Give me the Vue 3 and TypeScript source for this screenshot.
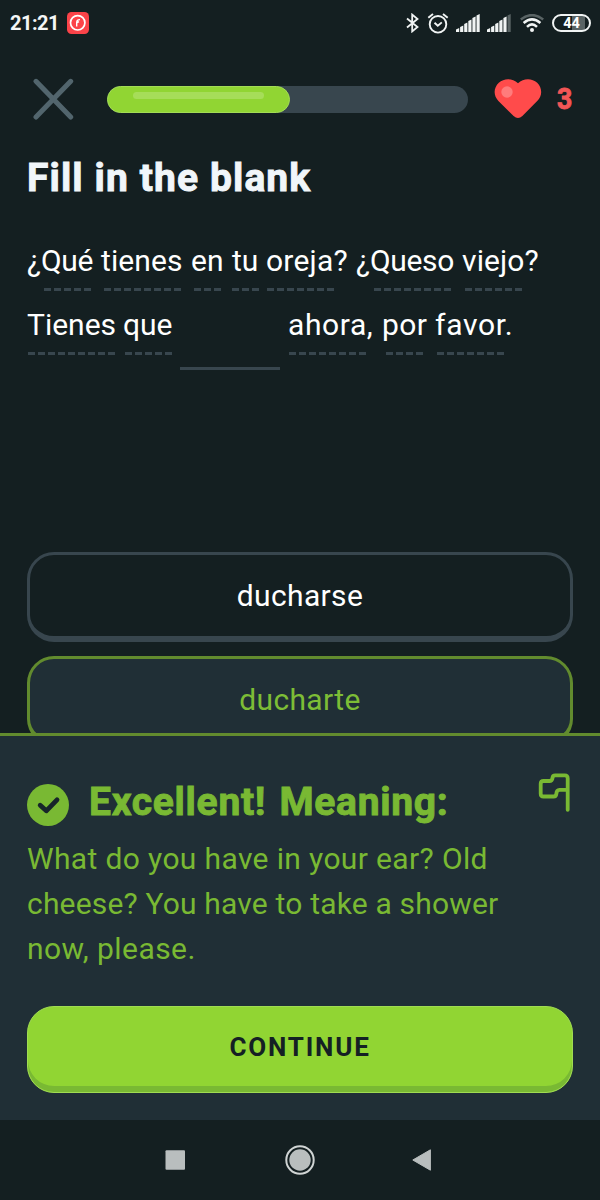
<script setup lang="ts">
interface Token {
  text: string
  width: number
  dashStart: number
  dashWidth: number
  spacing?: number
}

interface Line {
  text: string
  spacing: string
}

const firstLine: Token[] = [
  { text: '¿Qué', width: 74, dashStart: 17, dashWidth: 47, spacing: -0.3 },
  { text: 'tienes', width: 90, dashStart: 3, dashWidth: 77, spacing: 0.1 },
  { text: 'en', width: 41, dashStart: 3, dashWidth: 27 },
  { text: 'tu', width: 34, dashStart: 0, dashWidth: 27 },
  { text: 'oreja?', width: 90, dashStart: 0.5, dashWidth: 67, spacing: 0.2 },
  { text: '¿Queso', width: 106, dashStart: 18, dashWidth: 77, spacing: -0.3 },
  { text: 'viejo?', width: 80, dashStart: 3, dashWidth: 57, spacing: 0.1 },
]

const secondStart: Token[] = [
  { text: 'Tienes', width: 96, dashStart: 1, dashWidth: 87 },
  { text: 'que', width: 57, dashStart: 2, dashWidth: 47 },
]

const secondEnd: Token[] = [
  { text: 'ahora,', width: 94, dashStart: 1, dashWidth: 77, spacing: 0.6 },
  { text: 'por', width: 53, dashStart: 4, dashWidth: 37, spacing: 0.4 },
  { text: 'favor.', width: 82, dashStart: 2, dashWidth: 67, spacing: 0.7 },
]

const meaning: Line[] = [
  { text: 'What do you have in your ear? Old', spacing: '0.36px' },
  { text: 'cheese? You have to take a shower', spacing: '0.18px' },
  { text: 'now, please.', spacing: '0.45px' },
]

const progress = 183
const bars = [3.5, 6, 9, 12, 15, 17.5]

const barPoints = (h: number, i: number) => {
  const x = i * 4.1
  return `${x},18 ${x},${18 - h + 1} ${x + 3.2},${17.5 - h} ${x + 3.2},18`
}
const tokenStyle = (t: Token) => ({ width: `${t.width}px`, letterSpacing: `${t.spacing ?? 0}px` })
const dashStyle = (t: Token) => ({ left: `${t.dashStart}px`, width: `${t.dashWidth}px` })
</script>

<template>
  <div class="screen">
    <header class="status">
      <span class="clock">21:21</span>
      <svg class="app-badge" width="22" height="22" viewBox="0 0 22 22">
        <rect width="22" height="22" rx="4.5" fill="#fb4349" />
        <circle cx="10.7" cy="10.8" r="7.2" fill="none" stroke="#fff" stroke-width="1.7" />
        <path d="M9.7 14.6V10.2Q9.9 7.5 13 7.6M9.6 10.8l2.4-1.2" fill="none" stroke="#fff" stroke-width="1.4" />
      </svg>
      <div class="indicators">
        <svg width="14" height="20" viewBox="0 0 14 20">
          <path d="M2 5.5 12.5 14 7.2 18.4V1.6L12.5 6 2 14.5" fill="none" stroke="#f1f4f4" stroke-width="1.8" />
        </svg>
        <svg class="alarm" width="22" height="22" viewBox="0 0 22 22">
          <g fill="none" stroke="#f1f4f4" stroke-width="1.9">
            <circle cx="11" cy="12.3" r="8.3" />
            <path d="M1.3 5.8 6 2M20.7 5.8 16 2M7.5 10.8l3.3 3 4-3.4" />
          </g>
        </svg>
        <svg class="signal" width="24" height="18" viewBox="0 0 24 18">
          <polygon v-for="(h, i) in bars" :key="i" :points="barPoints(h, i)" fill="#f1f4f4" />
        </svg>
        <svg class="signal" width="24" height="18" viewBox="0 0 24 18">
          <polygon v-for="(h, i) in bars" :key="i" :points="barPoints(h, i)" :fill="i === 5 ? '#596364' : '#f1f4f4'" />
        </svg>
        <svg class="wifi" width="24" height="18" viewBox="0 0 24 18">
          <g fill="none" stroke-width="2.5">
            <path d="M.8 5.4Q12-3.2 23.2 5.4" stroke="#596364" />
            <path d="M3.6 9Q12 1.8 20.4 9" stroke="#f1f4f4" />
            <path d="M7 12.8Q12 8 17 12.8" stroke="#f1f4f4" />
          </g>
          <circle cx="12" cy="16" r="2" fill="#f1f4f4" />
        </svg>
        <span class="battery"><span>44</span></span>
      </div>
    </header>

    <div class="topbar">
      <svg class="close" width="42" height="42" viewBox="0 0 42 42">
        <path d="M3 3.3 37.7 39M37.7 3.3 3 39" stroke="#52656d" stroke-width="5" stroke-linecap="round" />
      </svg>
      <div class="track">
        <div class="fill" :style="{ width: `${progress}px` }"><i class="shine" /></div>
      </div>
      <svg class="heart" width="48" height="40" viewBox="0 0 48 40">
        <path
          d="M24 4.2C18.5-1 10-1 4.8 3.8C-.6 9-.8 16.5 4.4 22L19.6 37Q24 41 28.4 37L43.2 22C48.7 16.5 48.3 8.8 43.2 3.8C38-1 29.5-1 24 4.2Z"
          fill="#ff4b4b"
        />
        <circle cx="13" cy="13" r="5.7" fill="#ff7c7c" />
      </svg>
      <span class="lives">3</span>
    </div>

    <h1>Fill in the blank</h1>

    <div class="sentence">
      <div class="line">
        <span v-for="t in firstLine" :key="t.text" class="token" :style="tokenStyle(t)">{{ t.text }}<i :style="dashStyle(t)" /></span>
      </div>
      <div class="line">
        <span v-for="t in secondStart" :key="t.text" class="token" :style="tokenStyle(t)">{{ t.text }}<i :style="dashStyle(t)" /></span>
        <span class="blank" />
        <span v-for="t in secondEnd" :key="t.text" class="token" :style="tokenStyle(t)">{{ t.text }}<i :style="dashStyle(t)" /></span>
      </div>
    </div>

    <div class="choices">
      <button class="choice">ducharse</button>
      <button class="choice correct">ducharte</button>
    </div>

    <section class="result">
      <div class="result-head">
        <svg class="check" width="42" height="42" viewBox="0 0 42 42">
          <circle cx="21" cy="21" r="21" fill="#79b933" />
          <path d="M13.2 21.2 19.3 26.8 30 15.8" fill="none" stroke="#17252a" stroke-width="4.8" stroke-linecap="round" stroke-linejoin="round" />
        </svg>
        <h2>Excellent! Meaning:</h2>
        <svg class="flag" width="34" height="40" viewBox="0 0 34 40">
          <path
            d="M30.7 36.8V5.2Q30.7 2.4 27.9 2.4H18.3Q15.6 2.4 15.5 5Q15.2 8 12.3 8H6.5Q3.7 8 3.7 10.8V20.7Q3.7 23.5 6.5 23.5H16.6Q19.1 23.5 19.3 21Q19.6 17 22.5 16.9H30.7"
            fill="none" stroke="#79b933" stroke-width="3.8" stroke-linecap="round" stroke-linejoin="round"
          />
        </svg>
      </div>
      <p class="meaning">
        <span v-for="l in meaning" :key="l.text" :style="{ letterSpacing: l.spacing }">{{ l.text }}</span>
      </p>
      <button class="continue">CONTINUE</button>
    </section>

    <nav class="navbar">
      <svg width="20" height="20" viewBox="0 0 20 20"><rect x=".5" y=".3" width="19.5" height="19.5" rx="1" fill="#b9bebe" /></svg>
      <svg class="home" width="30" height="30" viewBox="0 0 30 30">
        <circle cx="15" cy="15" r="13.7" fill="none" stroke="#d0d4d4" stroke-width="2" />
        <circle cx="15" cy="15" r="10.7" fill="#b9bebe" />
      </svg>
      <svg class="back" width="20" height="22" viewBox="0 0 20 22"><path d="M.8 11 18.4.8V21.2Z" fill="#b9bebe" stroke="#b9bebe" stroke-linejoin="round" /></svg>
    </nav>
  </div>
</template>

<style>
body {
  background: #141f21;
}
</style>

<style scoped>
.screen {
  width: 600px;
  height: 1200px;
  display: flex;
  flex-direction: column;
  overflow: hidden;
  background: #141f21;
  color: #fff;
  font-family: Roboto, "Liberation Sans", sans-serif;
}
.screen * {
  box-sizing: border-box;
}
.screen svg {
  display: block;
  flex: none;
}
.status {
  height: 46px;
  padding: 0 9px 0 10px;
  display: flex;
  align-items: center;
  flex: none;
}
.clock {
  width: 57px;
  font-size: 20px;
  font-weight: 700;
  letter-spacing: -0.5px;
  color: #f4f6f6;
}
.indicators {
  display: flex;
  align-items: center;
  margin-left: auto;
}
.alarm {
  margin-left: 8px;
  margin-top: -1px;
}
.signal {
  margin-left: 7px;
}
.wifi {
  margin: 0 8.5px 0 8.5px;
}
.battery {
  width: 39px;
  height: 18px;
  display: flex;
  justify-content: center;
  align-items: center;
  border: 2px solid #f1f4f4;
  border-radius: 9px;
  background: linear-gradient(90deg, transparent 50%, #596364 50% 88%, transparent 88%);
  font-size: 14.5px;
  font-weight: 700;
  line-height: 14px;
}
.battery span {
  padding-top: 1px;
}
.topbar {
  height: 108px;
  padding: 0 27px 2px 33px;
  display: flex;
  align-items: center;
  flex: none;
}
.track {
  width: 361px;
  height: 27px;
  margin-left: 31.5px;
  margin-right: 26.5px;
  border-radius: 14px;
  background: #38464e;
  flex: none;
}
.fill {
  height: 27px;
  padding: 5px 25px;
  border: 1px solid #a3dc55;
  border-radius: 14px;
  background: #91d533;
}
.shine {
  display: block;
  height: 7px;
  border-radius: 4px;
  background: #a6dd59;
}
.lives {
  margin-left: 15px;
  font-size: 29px;
  font-weight: 700;
  line-height: 34px;
  color: #f35656;
  -webkit-text-stroke: 0.8px #f35656;
  transform: scaleX(0.92);
  transform-origin: left;
}
h1,
h2 {
  margin: 0;
  font-size: 39px;
  font-weight: 700;
  line-height: 48px;
  white-space: nowrap;
  stroke-linejoin: round;
}
h1 {
  padding-left: 27px;
  letter-spacing: 1.1px;
  color: #f1f6fa;
  -webkit-text-stroke: 0.9px #f1f6fa;
  flex: none;
}
.sentence {
  height: 323px;
  padding: 27px 0 0 27px;
  flex: none;
}
.line {
  display: flex;
  height: 64px;
  font-size: 30px;
  line-height: 64px;
  white-space: nowrap;
}
.token {
  position: relative;
  flex: none;
}
.token i {
  position: absolute;
  top: 59px;
  height: 3px;
  background: repeating-linear-gradient(90deg, #38464e 0 7px, transparent 7px 10px);
}
.blank {
  width: 100px;
  height: 77px;
  margin-right: 8px;
  border-bottom: 3px solid #38464e;
  flex: none;
}
.choices {
  height: 208px;
  margin-top: 27px;
  padding: 0 27px;
  display: flex;
  flex-direction: column;
  gap: 14px;
  flex: none;
}
.choice {
  height: 90px;
  padding: 0;
  border: 3px solid #38464e;
  border-bottom-width: 6px;
  border-radius: 27px;
  background: #141f21;
  color: #fff;
  font: 400 30px/81px Roboto, "Liberation Sans", sans-serif;
  letter-spacing: 0.35px;
  flex: none;
}
.choice.correct {
  border-color: #628b2e;
  background: #202f36;
  color: #7dbd36;
}
.result {
  position: relative;
  height: 387px;
  margin-top: -27px;
  padding: 41px 27px 0;
  border-top: 3px solid #628b2e;
  background: #202f36;
  color: #79b933;
  flex: none;
}
.result-head {
  display: flex;
  height: 59px;
}
.check {
  margin: 7px 20px 0 0;
}
h2 {
  margin-top: 1px;
  letter-spacing: 0.7px;
  word-spacing: 3px;
  -webkit-text-stroke: 0.9px #79b933;
}
.flag {
  margin: -4px 2.5px 0 auto;
}
.meaning {
  display: flex;
  flex-direction: column;
  margin: 0;
  font-size: 30px;
  line-height: 45px;
  white-space: nowrap;
}
.continue {
  display: block;
  width: 546px;
  height: 87px;
  margin-top: 35px;
  padding: 0 0 5px;
  border: 1px solid #a0dc52;
  border-radius: 27px;
  background: #91d533;
  box-shadow: inset 0 -6px #79b933;
  color: #142024;
  font: 700 26px/79px Roboto, "Liberation Sans", sans-serif;
  letter-spacing: 1.8px;
}
.navbar {
  height: 80px;
  padding: 0 0 0 165px;
  display: flex;
  align-items: center;
  flex: none;
}
.home {
  margin-left: 99.5px;
}
.back {
  margin-left: 97.5px;
}
</style>
